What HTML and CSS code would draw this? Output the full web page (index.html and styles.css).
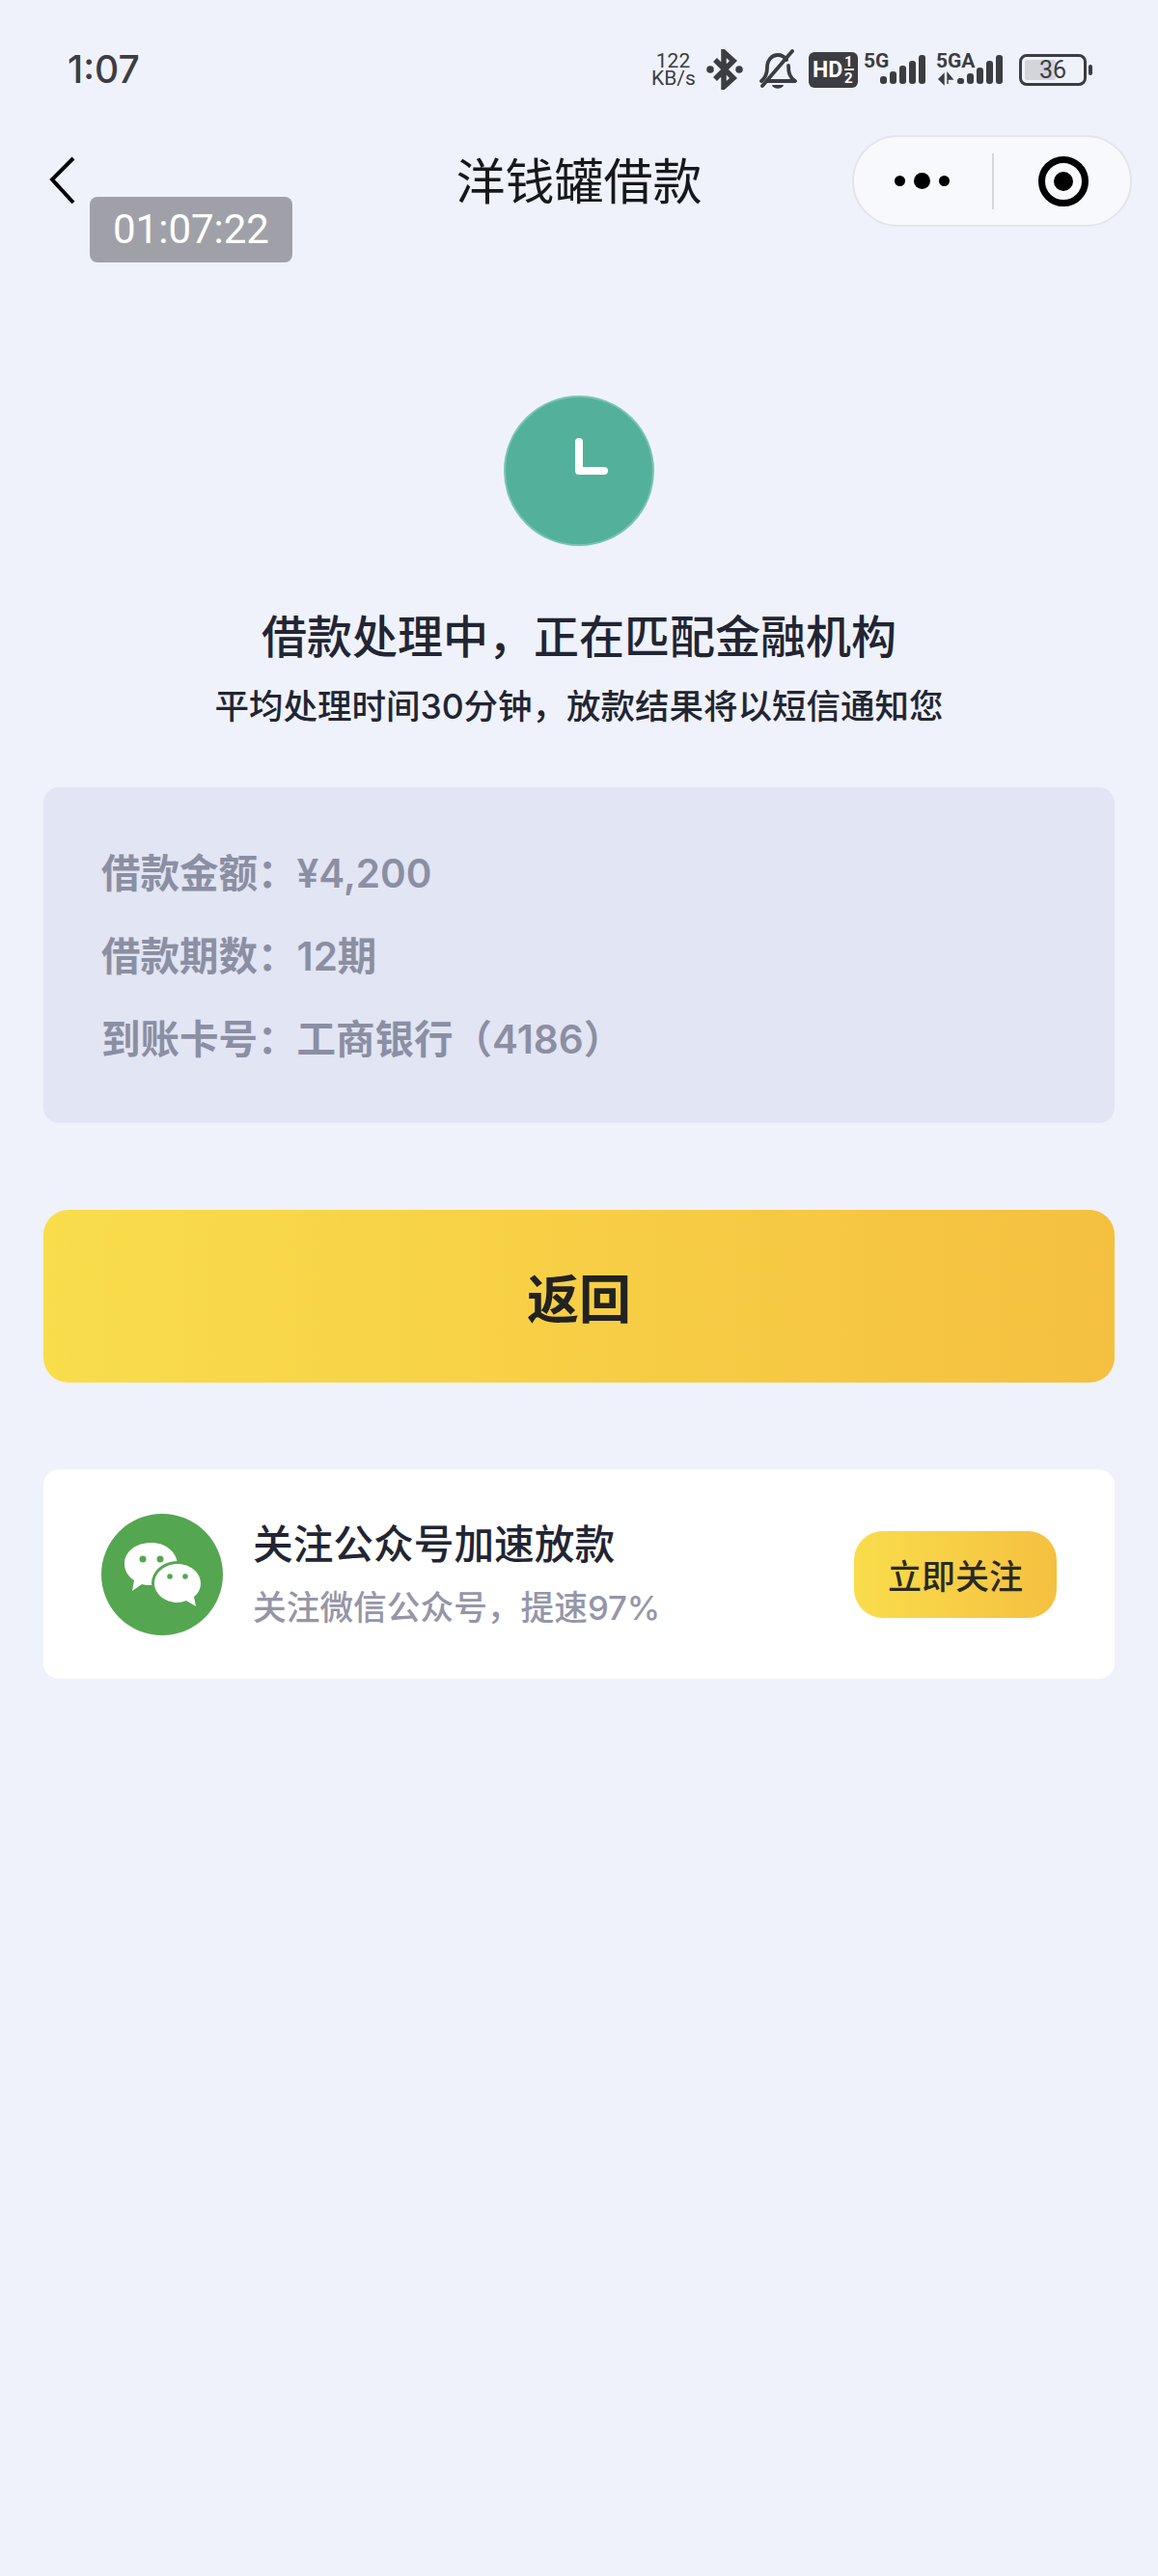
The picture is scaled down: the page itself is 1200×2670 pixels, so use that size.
FILE: index.html
```html
<!DOCTYPE html>
<html lang="zh-CN">
<head>
    <meta charset="utf-8">
    <meta name="viewport" content="width=device-width, initial-scale=1.0">
    <title>洋钱罐借款</title>
    <link rel="stylesheet" href="styles.css">
</head>
<body>
    <div class="status-bar">
        <span class="status-time">1:07</span>
        <div class="status-icons">
            <div class="net-speed">122<br>KB/s</div>
            <svg class="icon-bt" width="38" height="42" viewBox="0 0 38 42">
                <path d="M9 11 L28 30 L18 39 V3 L28 12 L9 31" fill="none" stroke="#3c3d42" stroke-width="5.5"/>
                <circle cx="4" cy="21" r="3.8" fill="#3c3d42"/>
                <circle cx="34" cy="21" r="3.8" fill="#3c3d42"/>
            </svg>
            <svg class="icon-bell" width="40" height="42" viewBox="0 0 40 42">
                <path d="M3 33 C8 29 9 25 9 19 C9 11 14 6 20 6 C24 6 27 8 29 11 M31 17 C31 24 32 29 38 33 H9" fill="none" stroke="#3c3d42" stroke-width="3.8" stroke-linejoin="round" stroke-linecap="round"/>
                <path d="M4 38 L35 2" stroke="#3c3d42" stroke-width="3.8" stroke-linecap="round"/>
                <path d="M14 37 H26 C25 42 15 42 14 37 Z" fill="#3c3d42"/>
            </svg>
            <svg class="icon-hd" width="51" height="37" viewBox="0 0 51 37">
                <rect width="51" height="37" rx="6" fill="#3c3d42"/>
                <text x="4" y="26" class="hd-text">HD</text>
                <text x="37" y="15" class="hd-sub">1</text>
                <text x="37" y="32" class="hd-sub">2</text>
                <rect x="37" y="17" width="10" height="2" fill="#fff"/>
            </svg>
            <svg class="icon-5g" width="65" height="44" viewBox="0 0 65 44">
                <text x="0" y="20" class="sig-text">5G</text>
                <rect x="17" y="29" width="7" height="8" rx="3" fill="#3c3d42"/>
                <rect x="27" y="24" width="7" height="13" rx="3" fill="#3c3d42"/>
                <rect x="37" y="18" width="7" height="19" rx="3" fill="#3c3d42"/>
                <rect x="47" y="13" width="7" height="24" rx="3" fill="#3c3d42"/>
                <rect x="57" y="7" width="7" height="30" rx="3" fill="#3c3d42"/>
            </svg>
            <svg class="icon-5ga" width="71" height="44" viewBox="0 0 71 44">
                <text x="0" y="20" class="sig-text">5GA</text>
                <path d="M3 32 L8 27 V37 Z M12 26 L17 32 H12 Z M12 32 V37" fill="#3c3d42" stroke="#3c3d42" stroke-width="1.4"/>
                <rect x="22" y="31" width="7" height="6" rx="2.5" fill="#3c3d42"/>
                <rect x="32" y="26" width="7" height="11" rx="3" fill="#3c3d42"/>
                <rect x="42" y="20" width="7" height="17" rx="3" fill="#3c3d42"/>
                <rect x="52" y="13" width="7" height="24" rx="3" fill="#3c3d42"/>
                <rect x="62" y="7" width="7" height="30" rx="3" fill="#3c3d42"/>
            </svg>
            <div class="battery">
                <div class="battery-body">
                    <div class="battery-fill"></div>
                    <span class="battery-num">36</span>
                </div>
                <div class="battery-tip"></div>
            </div>
        </div>
    </div>

    <div class="nav-bar">
        <svg class="nav-back" width="30" height="52" viewBox="0 0 30 52">
            <path d="M26 3 L4 25 L26 49" fill="none" stroke="#000" stroke-width="4"/>
        </svg>
        <div class="nav-title">洋钱罐借款</div>
        <div class="capsule">
            <div class="capsule-dots">
                <i class="dot"></i><i class="dot dot-big"></i><i class="dot"></i>
            </div>
            <div class="capsule-line"></div>
            <div class="capsule-target"><i></i></div>
        </div>
        <div class="timer">01:07:22</div>
    </div>

    <div class="result">
        <svg class="result-icon" width="156" height="156" viewBox="0 0 156 156">
            <circle cx="78" cy="78" r="77" fill="#53b19b" stroke="#7cc4b3" stroke-width="2"/>
            <path d="M78 48 V78 H104" fill="none" stroke="#fff" stroke-width="8" stroke-linecap="round" stroke-linejoin="round"/>
        </svg>
        <h1 class="result-title">借款处理中，正在匹配金融机构</h1>
        <p class="result-sub">平均处理时间30分钟，放款结果将以短信通知您</p>
    </div>

    <div class="info-card">
        <div class="info-row">借款金额：¥4,200</div>
        <div class="info-row">借款期数：12期</div>
        <div class="info-row">到账卡号：工商银行（4186）</div>
    </div>

    <button class="back-button">返回</button>

    <div class="follow-card">
        <svg class="follow-icon" width="126" height="126" viewBox="0 0 126 126">
            <circle cx="63" cy="63" r="63" fill="#55a650"/>
            <path d="M24 52 C24 39 36 30 52 30 C66 30 78 39 79 52 C79 65 66 74 52 74 C48 74 45 74 42 73 L32 80 L34 69 C28 65 24 59 24 52 Z" fill="#fff"/>
            <ellipse cx="79" cy="72" rx="27" ry="23" fill="#55a650"/>
            <path d="M55 72 C55 61 66 52 79 52 C92 52 103 61 103 72 C103 78 100 83 96 86 L98 96 L88 90 C85 91 82 92 79 92 C66 92 55 83 55 72 Z" fill="#fff"/>
            <circle cx="43" cy="47" r="3.5" fill="#55a650"/>
            <circle cx="61" cy="47" r="3.5" fill="#55a650"/>
            <circle cx="71" cy="65" r="2.8" fill="#55a650"/>
            <circle cx="87" cy="65" r="2.8" fill="#55a650"/>
        </svg>
        <div class="follow-text">
            <div class="follow-title">关注公众号加速放款</div>
            <div class="follow-sub">关注微信公众号，提速97%</div>
        </div>
        <button class="follow-button">立即关注</button>
    </div>
</body>
</html>
```

FILE: styles.css
```css
* {
    box-sizing: border-box;
}
body {
    margin: 0;
    width: 1200px;
    height: 2670px;
    background-color: #eff2fa;
    font-family: Inter, "Noto Sans CJK SC", sans-serif;
    color: #222533;
}

/* status bar */
.status-bar {
    height: 140px;
    padding: 50px 68px 0 70px;
    display: flex;
    justify-content: space-between;
    align-items: flex-start;
}
.status-time {
    font-size: 39px;
    line-height: 44px;
    font-weight: 500;
    color: #3c3d42;
}
.status-icons {
    display: flex;
    align-items: center;
    height: 44px;
}
.net-speed {
    width: 45px;
    margin-right: 12px;
    font-family: Roboto, sans-serif;
    font-size: 21px;
    line-height: 18px;
    text-align: center;
    color: #3c3d42;
}
.icon-bt {
    margin-right: 16px;
}
.icon-bell {
    margin-right: 12px;
}
.icon-hd {
    margin-right: 6px;
}
.icon-5g {
    margin-right: 10px;
}
.icon-5ga {
    margin-right: 15px;
}
.hd-text {
    font-size: 23px;
    font-weight: 700;
    fill: #fff;
    font-family: Roboto, sans-serif;
}
.hd-sub {
    font-size: 15px;
    font-weight: 700;
    fill: #fff;
    font-family: Roboto, sans-serif;
}
.sig-text {
    font-size: 21px;
    font-weight: 700;
    fill: #3c3d42;
    font-family: Roboto, sans-serif;
}
.battery {
    display: flex;
    align-items: center;
    gap: 2px;
}
.battery-body {
    position: relative;
    width: 70px;
    height: 33px;
    border: 3px solid #3c3d42;
    border-radius: 8px;
    padding: 3px;
    display: flex;
    align-items: center;
}
.battery-fill {
    width: 32px;
    height: 100%;
    background: #d3d4dc;
    border-radius: 3px;
}
.battery-num {
    position: absolute;
    left: 18px;
    top: 1px;
    font-family: Roboto, sans-serif;
    font-size: 25px;
    line-height: 26px;
    color: #3c3d42;
}
.battery-tip {
    width: 4px;
    height: 11px;
    background: #3c3d42;
    border-radius: 2px;
}

/* nav bar */
.nav-bar {
    position: relative;
    height: 95px;
    padding: 0 27px;
    display: grid;
    grid-template-columns: 1fr auto 1fr;
    align-items: center;
}
.nav-title {
    margin-top: 2px;
    font-size: 51px;
    line-height: 93px;
    color: #17181c;
}
.nav-back {
    margin: -2px 0 0 23px;
}
.capsule {
    justify-self: end;
    width: 290px;
    height: 95px;
    display: flex;
    align-items: center;
    background: #f8f9fd;
    border: 2px solid #e4e5ec;
    border-radius: 48px;
}
.capsule-dots {
    width: 143px;
    padding-right: 3px;
    display: flex;
    align-items: center;
    justify-content: center;
    gap: 9px;
}
.dot {
    width: 11px;
    height: 11px;
    border-radius: 50%;
    background: #000;
}
.dot-big {
    width: 17px;
    height: 17px;
}
.capsule-line {
    width: 2px;
    height: 58px;
    background: #d8d9e0;
}
.capsule-target {
    flex: 1;
    display: flex;
    justify-content: center;
    align-items: center;
    padding-left: 3px;
}
.capsule-target i {
    width: 52px;
    height: 52px;
    border: 7px solid #000;
    border-radius: 50%;
    display: flex;
    align-items: center;
    justify-content: center;
}
.capsule-target i::after {
    content: "";
    width: 20px;
    height: 20px;
    border-radius: 50%;
    background: #000;
}
.timer {
    position: absolute;
    left: 93px;
    top: 64px;
    width: 210px;
    height: 68px;
    background: #a0a1a8;
    border-radius: 8px;
    color: #fff;
    font-family: Roboto, sans-serif;
    font-size: 42px;
    line-height: 68px;
    text-align: center;
}

/* result */
.result {
    margin-top: 175px;
    display: flex;
    flex-direction: column;
    align-items: center;
}
.result-title {
    margin: 64px 0 0;
    font-size: 47px;
    line-height: 60px;
    font-weight: 500;
    color: #222533;
}
.result-sub {
    margin: 19px 0 0;
    font-size: 35.5px;
    line-height: 48px;
    font-weight: 500;
    color: #222533;
}

/* info card */
.info-card {
    margin: 59px 45px 0;
    height: 348px;
    padding: 47px 60px 0;
    background: #e2e5f3;
    border-radius: 16px;
}
.info-row {
    font-size: 40.5px;
    line-height: 86px;
    font-weight: 600;
    color: #8b8fa3;
}

.back-button {
    display: block;
    margin: 90px 45px 0;
    width: 1110px;
    height: 179px;
    border: none;
    border-radius: 26px;
    background: linear-gradient(90deg, #f9dd4b, #f5c040);
    font-family: inherit;
    font-size: 54px;
    font-weight: 700;
    color: #222222;
}

/* follow card */
.follow-card {
    margin: 90px 45px 0;
    height: 217px;
    padding: 0 60px;
    background: #fff;
    border-radius: 16px;
    display: flex;
    align-items: center;
}
.follow-text {
    flex: 1;
    margin-left: 31px;
}
.follow-title {
    font-size: 41.7px;
    line-height: 56px;
    font-weight: 500;
    color: #222533;
}
.follow-sub {
    margin-top: 13px;
    font-size: 34.7px;
    line-height: 48px;
    font-weight: 500;
    color: #9596a8;
}
.follow-button {
    width: 210px;
    height: 90px;
    border: none;
    border-radius: 30px;
    background: linear-gradient(90deg, #f9dd4b, #f5c040);
    font-family: inherit;
    font-size: 35px;
    font-weight: 500;
    color: #2b2a20;
}
```
